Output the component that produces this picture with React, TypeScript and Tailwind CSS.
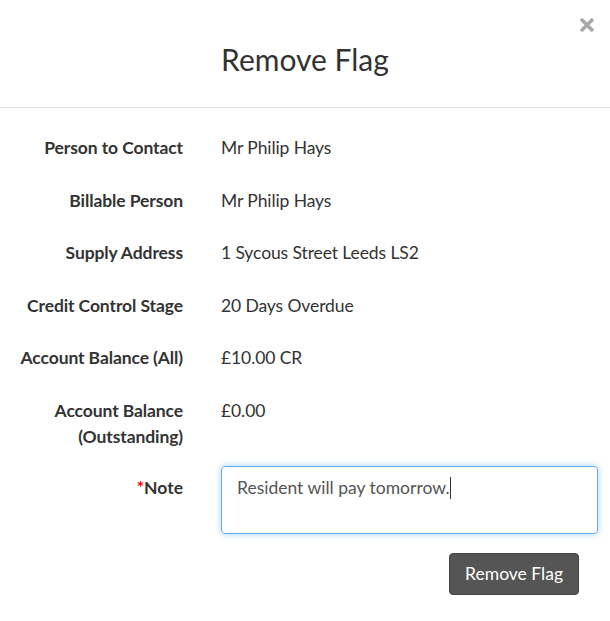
import React from "react";

const rows: { label: React.ReactNode; value: string }[] = [
  { label: "Person to Contact", value: "Mr Philip Hays" },
  { label: "Billable Person", value: "Mr Philip Hays" },
  { label: "Supply Address", value: "1 Sycous Street Leeds LS2" },
  { label: "Credit Control Stage", value: "20 Days Overdue" },
  { label: "Account Balance (All)", value: "£10.00 CR" },
  {
    label: (
      <>
        Account Balance
        <br />
        (Outstanding)
      </>
    ),
    value: "£0.00",
  },
];

export default function App() {
  return (
    <div className="w-[610px] h-[621px] bg-white text-[#333] font-['Lato',_'Noto_Sans',_sans-serif] relative overflow-hidden">
      <div className="h-[108px] border-b border-[#e5e5e5] flex items-center justify-center relative">
        <h1 className="text-[30px] leading-none pt-[11px] text-[#333] font-normal">Remove Flag</h1>
        <button className="absolute right-[15px] top-[17px] w-[16px] h-[16px]">
          <svg width="16" height="16" viewBox="0 0 16 16">
            <path d="M2 2 L14 14 M14 2 L2 14" stroke="#a8a8a8" strokeWidth="3.6" strokeLinecap="butt" />
          </svg>
        </button>
      </div>
      <div className="pt-[27px] flex flex-col gap-[26.5px]">
        {rows.map((r, i) => (
          <div key={i} className="flex text-[17.5px] leading-[26px]">
            <div className="w-[183px] text-right font-bold shrink-0 tracking-[-0.1px]">{r.label}</div>
            <div className="ml-[38px] tracking-[-0.1px]">{r.value}</div>
          </div>
        ))}
      </div>
      <div className="flex mt-[16px] text-[17.5px] leading-[26px]">
        <div className="w-[183px] text-right font-bold shrink-0 pt-[9px]">
          <span className="text-[#e00]">*</span>Note
        </div>
        <div className="ml-[38px] w-[377px] h-[68px] rounded-[4px] border border-[#66afe9] shadow-[0_0_6px_rgba(102,175,233,0.6)] px-[15px] pt-[8px] text-[17.5px] leading-[26px] text-[#555] flex items-start">
          <span>Resident will pay tomorrow.</span>
          <span className="inline-block w-px h-[22px] bg-[#333] mt-[2px]" />
        </div>
      </div>
      <div className="flex justify-end pr-[31px] mt-[19px]">
        <button className="h-[42px] px-[15px] bg-[#555] rounded-[4px] border border-[#444] text-white text-[17.5px] leading-none">
          Remove Flag
        </button>
      </div>
    </div>
  );
}
